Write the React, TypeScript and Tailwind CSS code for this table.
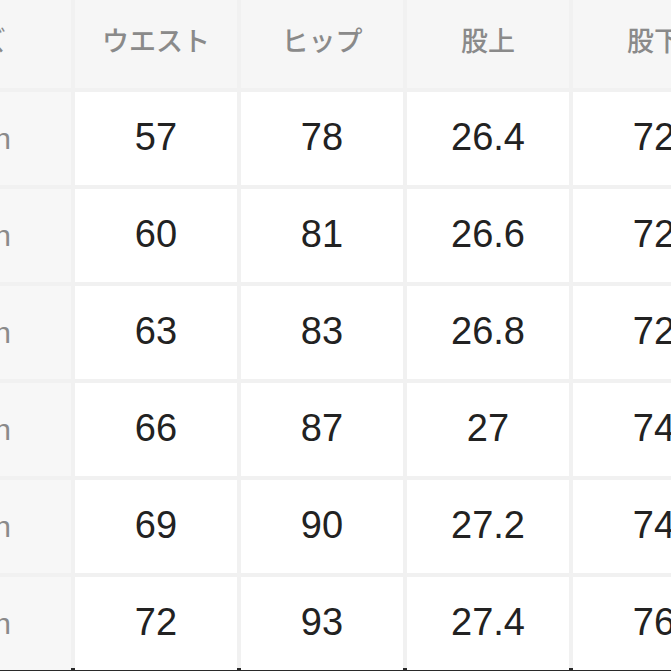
import React from "react";

const headers = ["ウエスト", "ヒップ", "股上", "股下"];

const rows = [
  ["57", "78", "26.4", "72"],
  ["60", "81", "26.6", "72"],
  ["63", "83", "26.8", "72"],
  ["66", "87", "27", "74"],
  ["69", "90", "27.2", "74"],
  ["72", "93", "27.4", "76"],
];

const App: React.FC = () => {
  return (
    <div className="h-[671px] w-[671px] overflow-hidden bg-[#f1f1f1]">
      <div className="grid grid-cols-[71px_162px_162px_162px_162px] grid-rows-[88px_93px_93px_93px_93px_93px_93px] gap-[4px]">
        {/* Header row */}
        <div className="flex items-center justify-end overflow-hidden bg-[#f6f6f6] pb-[8px] pr-[65px] font-['Noto_Sans_CJK_JP',sans-serif] text-[27px] text-[#8a8a8a]">
          <span className="whitespace-nowrap">サイズ</span>
        </div>
        {headers.map((h) => (
          <div
            key={h}
            className="flex items-center justify-center bg-[#f6f6f6] pb-[8px] font-['Noto_Sans_CJK_JP',sans-serif] text-[27px] font-medium text-[#8a8a8a]"
          >
            <span className="whitespace-nowrap">{h}</span>
          </div>
        ))}
        {/* Body rows */}
        {rows.map((row, i) => (
          <React.Fragment key={i}>
            <div className="flex items-center justify-end overflow-hidden bg-[#f7f7f7] pr-[60px] font-['Liberation_Sans',sans-serif] text-[30px] text-[#8a8a8a]">
              <span className="whitespace-nowrap">n</span>
            </div>
            {row.map((v, j) => (
              <div
                key={j}
                className="flex items-center justify-center bg-white pb-[2px] font-['Liberation_Sans',sans-serif] text-[38px] text-[#222]"
              >
                {v}
              </div>
            ))}
          </React.Fragment>
        ))}
      </div>
      <div className="mt-[-2px] h-[3px] w-full bg-[#2a2a2a]" />
    </div>
  );
};

export default App;
